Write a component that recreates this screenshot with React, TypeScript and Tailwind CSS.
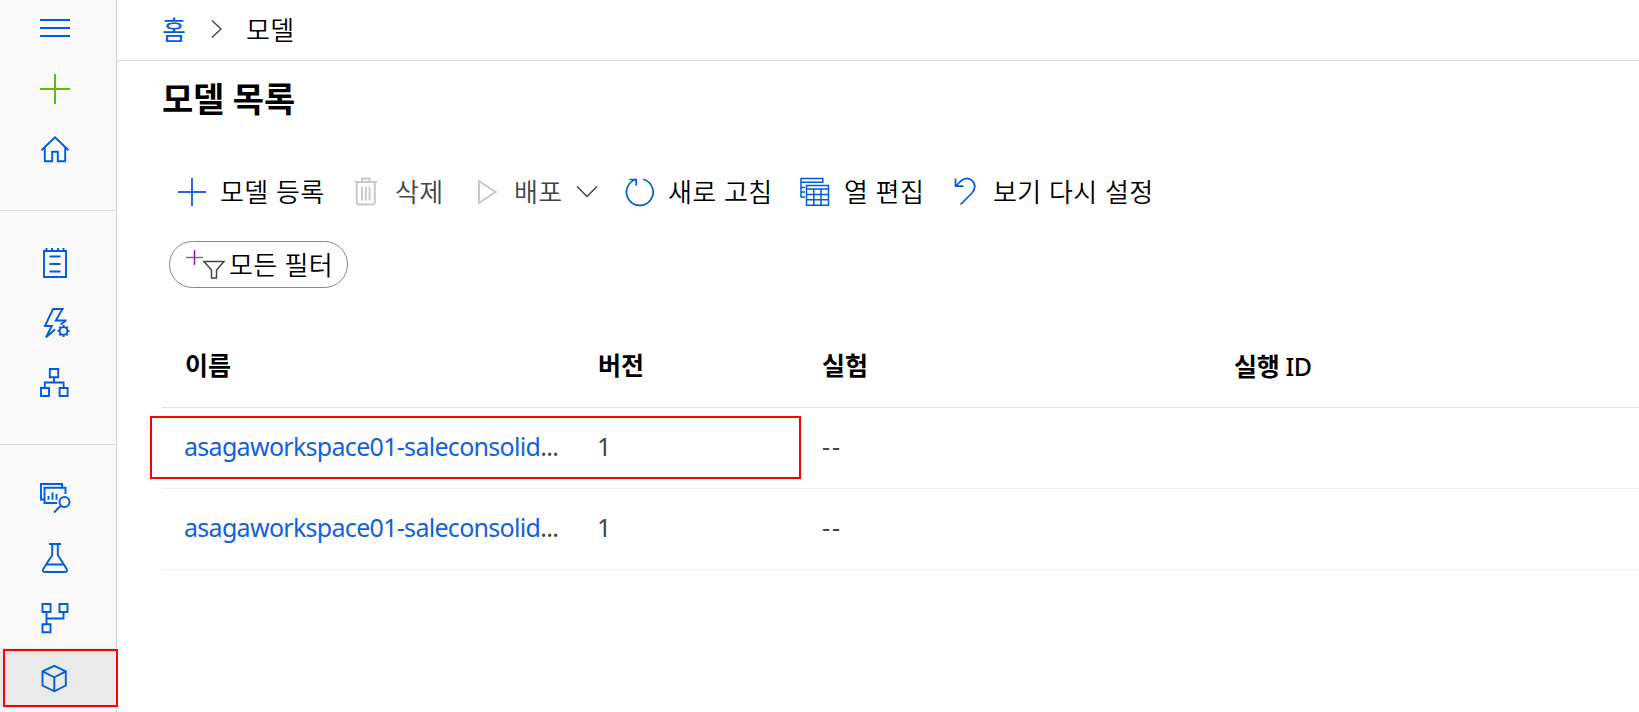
import type { ReactNode } from "react";

function Icon({ children, className = "" }: { children: ReactNode; className?: string }) {
  return (
    <svg
      viewBox="0 0 30 30"
      className={`h-[30px] w-[30px] shrink-0 overflow-visible ${className}`}
      fill="none"
      stroke="currentColor"
      strokeWidth="1.9"
    >
      {children}
    </svg>
  );
}

const icons = {
  menu: <path strokeWidth="2" d="M0 7h30M0 15h30M0 23h30" />,
  add: <path strokeWidth="2" d="M0 15h30M15 0v30" />,
  home: <path d="M1.5 16.2 15 3.3 28.5 16.2M4.8 13.5V27.2H12.2V17.7H17.8V27.2H25.2V13.5" />,
  notebook: (
    <>
      <path d="M4 3h22v26H4zM6.5 0v3M12 0v3M18 0v3M23.5 0v3" />
      <path d="M9.5 8.500h11M9.500 16h11M9.500 23.500h11" />
    </>
  ),
  automated: (
    <>
      <path d="M26.500 12.500H15.800L22.500 1H13L5 18H11.800L6 29.200 15 21.500M26 12.500 20.500 16.500" />
      <circle cx="23.500" cy="23" r="3.900" />
      <path
        strokeWidth="2"
        d="M23.500 17v2M23.500 27v2M17.500 23h2M27.500 23h2M19.300 18.800l1.400 1.400M26.300 25.800l1.400 1.400M19.300 27.200l1.400-1.400M26.300 20.200l1.400-1.400"
      />
    </>
  ),
  designer: (
    <path d="M9.800 1h8.400v8.200H9.800zM1 20h8v8H1zM19.600 20h8v8h-8zM14 9.200v5.300M4.800 20v-5.500h18.800V20" />
  ),
  datasets: (
    <>
      <path d="M4.500 16.500H1V1H22V4.500M17 20H4.500V4.800H25.500V11M8.500 13v3.800M12.500 9.500v7.300M16.500 11v5.800" />
      <circle cx="24.500" cy="19" r="5" />
      <path d="M21 22.500 14 29.500" />
    </>
  ),
  experiments: (
    <path d="M9 1h12M12.200 1v11L3.200 26.200Q2 29 5 29H25Q28 29 26.800 26.200L17.800 12V1M6.500 21.500h17" />
  ),
  pipelines: (
    <path d="M2.500 1h8v8h-8zM19.500 1h8v8h-8zM2.500 21.200h8v8h-8zM6.500 9v12.200M6.500 15.500h17V9" />
  ),
  models: <path d="M14.300 1.800 25.800 7.300V21.500L14.300 27.300 2.500 21.500V7.300zM2.500 7.300 14.300 13.300 25.800 7.300M14.300 13.300V27.300" />,
};

function NavItem({ icon, className = "" }: { icon: ReactNode; className?: string }) {
  return (
    <div className={`flex h-[60px] items-center pl-10 text-[#015cda] ${className}`}>
      <Icon>{icon}</Icon>
    </div>
  );
}

function Sidebar() {
  return (
    <nav className="relative flex w-[117px] shrink-0 flex-col border-r border-[#d2d2d2] bg-[#f9f9f9]">
      <div className="flex h-[211px] w-[115px] flex-col border-b border-[#dcdcdc]">
        <NavItem icon={icons.menu} className="-mt-[2px]" />
        <NavItem icon={icons.add} className="mt-px !text-[#6bb700]" />
        <NavItem icon={icons.home} />
      </div>
      <div className="flex h-[234px] w-[115px] flex-col border-b border-[#dcdcdc] pt-[22px]">
        <NavItem icon={icons.notebook} />
        <NavItem icon={icons.automated} />
        <NavItem icon={icons.designer} />
      </div>
      <div className="flex w-[115px] flex-col pt-[23px]">
        <NavItem icon={icons.datasets} />
        <NavItem icon={icons.experiments} />
        <NavItem icon={icons.pipelines} />
        <NavItem icon={icons.models} className="bg-[#eaeaea] pt-px" />
      </div>
      <div className="absolute top-[649px] left-[3px] h-[58px] w-[115px] border-2 border-[#fe0000]" />
    </nav>
  );
}

function Label({ children, className }: { children: ReactNode; className: string }) {
  return <span className={`shrink-0 whitespace-nowrap ${className}`}>{children}</span>;
}

function Toolbar() {
  return (
    <div className="flex h-[60px] items-center pl-[60px] text-[26px] font-[350] tracking-[0.45px] text-black">
      <Icon className="-ml-px text-[#1f62dc]">
        <path d="M2 15h28M16 1v28" />
      </Icon>
      <Label className="ml-[14px] w-[132px]">모델 등록</Label>
      <Icon className="mr-[13px] text-[#c8c8c8]">
        <path strokeWidth="2" d="M2.500 5h22.500M10 4.500V1.500h7.500v3M4.800 5v20.500q0 2 2 2h14q2 0 2-2V5" />
        <path d="M10 9.500v14M13.800 9.500v14M17.600 9.500v14" />
      </Icon>
      <Label className="w-[80px] text-[#444]">삭제</Label>
      <Icon className="mr-[9px] text-[#c8c8c8]">
        <path strokeWidth="2" d="M4 4v22L20.500 15z" />
      </Icon>
      <Label className="w-[60px] text-[#444]">배포</Label>
      <Icon className="mr-[21px] text-[#444]">
        <path strokeWidth="1.500" d="M3 9.500 13 19.500 23 9.500" />
      </Icon>
      <Icon className="mr-[13px] text-[#015cda]">
        <path strokeWidth="1.700" d="M18.200 2.300A13.300 13.300 0 1 1 11.400 2.300M4.500 2.500H11.200V8.500" />
      </Icon>
      <Label className="w-[132px]">새로 고침</Label>
      <Icon className="mr-[14px] text-[#015cda]">
        <path strokeWidth="1.500" d="M5 20H1V1.500H22.800V6M1 5.200H22.800M1 10.500h4M1 15h4M6.500 8.500h22v19.800h-22zM6.500 12h22M6.500 17.500h22M6.500 22.800h22M13.800 12v16.300M21 12v16.300" />
      </Icon>
      <Label className="w-[109px]">열 편집</Label>
      <Icon className="mr-[10px] text-[#015cda]">
        <path strokeWidth="1.700" d="M2.500 1.500V9.200H10.500M2.800 9 8 4Q13.500-.8 18.500 3.200 25 9 19 16L7.500 27.500" />
      </Icon>
      <Label className="">보기 다시 설정</Label>
    </div>
  );
}

const cells = "grid w-full grid-cols-[413px_224px_413px_1fr] items-center pl-[23px]";

function Row({ name, version, experiment }: { name: string; version: string; experiment: string }) {
  return (
    <div className={`h-[81px] border-b border-[#f0f0f0] pb-[3px] text-[25px] text-[#444] ${cells}`}>
      <span className="-ml-px w-[376px] whitespace-nowrap tracking-[-0.7px]">
        <a className="text-[#0f62dc]">{name}</a>...
      </span>
      <span className="-ml-px">{version}</span>
      <span className="tracking-[2px]">{experiment}</span>
      <span />
    </div>
  );
}

export default function App() {
  return (
    <div className="flex h-[712px] w-[1639px] overflow-hidden bg-white font-['Noto_Sans','Noto_Sans_CJK_KR',sans-serif] leading-none">
      <Sidebar />
      <main className="flex min-w-0 flex-1 flex-col">
        <header className="flex h-[61px] items-center border-b border-[#d6d6d6] pl-[45px] text-[26px] font-[350] text-black">
          <Label className="w-[46px] font-normal text-[#015cda]">홈</Label>
          <Icon className="mr-[8px] -translate-y-px text-[#444]">
            <path strokeWidth="1.400" d="M4 6.500 13 15 4 23.500" />
          </Icon>
          <Label className="tracking-[0.4px]">모델</Label>
        </header>
        <h1 className="flex h-[76px] items-center pl-[45px] text-[34px] font-bold tracking-[-0.2px] text-black">모델 목록</h1>
        <div className="h-[25px]" />
        <Toolbar />
        <div className="pt-[19px] pl-[52px]">
          <button className="flex h-[47px] w-[179px] items-center rounded-full border border-[#868686] pl-[16px] text-[26px] font-[350] tracking-[0.3px] text-black">
            <svg viewBox="0 0 42 30" className="mr-px h-[30px] w-[42px] shrink-0" fill="none">
              <path d="M0 7.500h17" stroke="#777" strokeWidth="1.500" />
              <path d="M8.500 0v15" stroke="#8a2090" strokeWidth="1.500" />
              <path d="M18 11.500h20L30.500 20v8h-5v-8z" stroke="#444" strokeWidth="1.500" />
            </svg>
            <Label className="">모든 필터</Label>
          </button>
        </div>
        <section className="mt-[39px] ml-[45px] flex flex-col">
          <div className={`h-[81px] border-b border-[#e6e6e6] pb-[3px] text-[25px] font-bold text-black ${cells}`}>
            <span>이름</span>
            <span>버전</span>
            <span>실험</span>
            <span className="-ml-px pt-px tracking-[-0.3px]">
              실행 <span className="font-medium tracking-[-0.8px]">ID</span>
            </span>
          </div>
          <div className="relative">
            <Row name="asagaworkspace01-saleconsolid" version="1" experiment="--" />
            <div className="absolute top-[8px] -left-[12px] h-[63px] w-[651px] border-2 border-[#fe0000]" />
          </div>
          <Row name="asagaworkspace01-saleconsolid" version="1" experiment="--" />
        </section>
      </main>
    </div>
  );
}
